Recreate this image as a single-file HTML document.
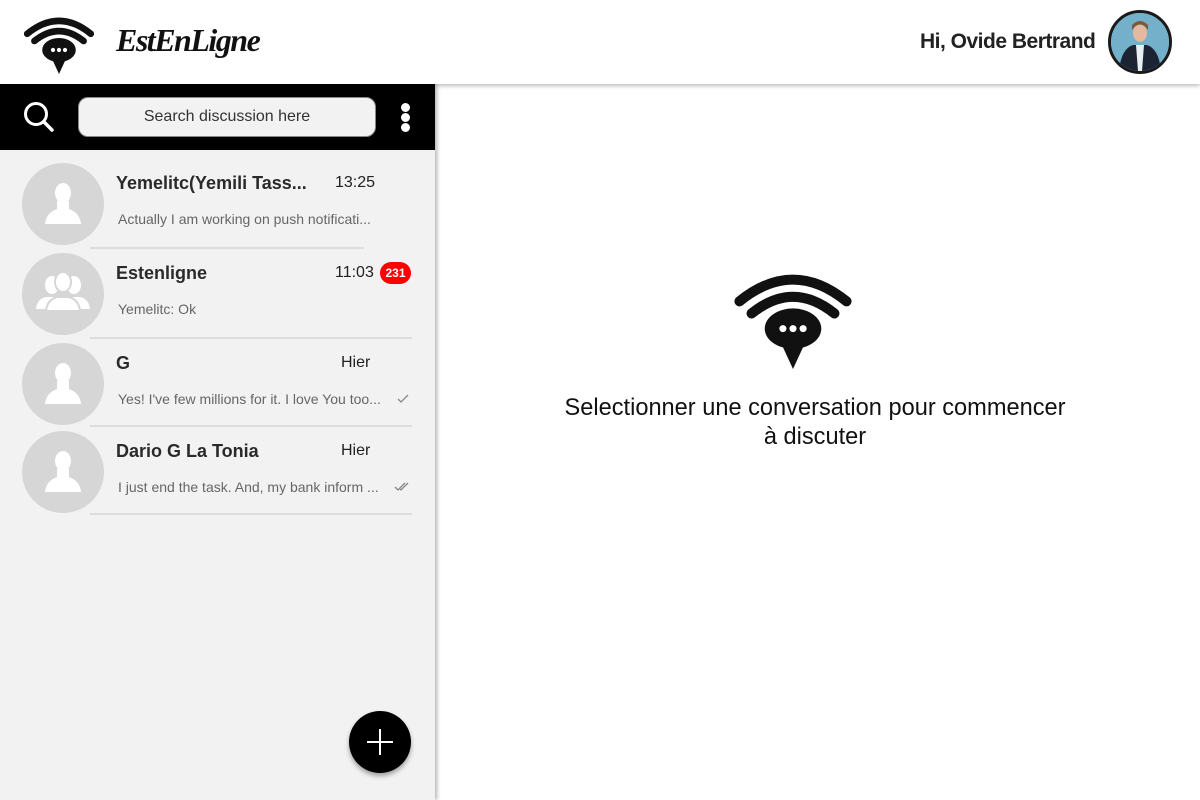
<!DOCTYPE html>
<html><head><meta charset="utf-8"><style>
*{box-sizing:border-box;margin:0;padding:0}
body{width:1200px;height:800px;overflow:hidden;background:#fff;font-family:"Liberation Sans",sans-serif;position:relative}
.hdr{position:absolute;left:0;top:0;width:1200px;height:84px;background:#fff;box-shadow:0 2px 4px rgba(0,0,0,.25);z-index:3}
.brand{position:absolute;left:116px;top:22px;font-family:"Liberation Serif",serif;font-style:italic;font-weight:bold;font-size:32px;letter-spacing:-1.5px;color:#111}
.hi{position:absolute;left:920px;top:30px;font-size:21px;font-weight:bold;color:#222;letter-spacing:-0.5px}
.me{position:absolute;left:1108px;top:10px;width:64px;height:64px;border-radius:50%;border:3px solid #1a1a1a;background:#6fa9c4;overflow:hidden}
.side{position:absolute;left:0;top:84px;width:435px;height:716px;background:#f2f2f2;box-shadow:2px 0 4px rgba(0,0,0,.3);z-index:2}
.bar{height:66px;background:#000;position:relative}
.search{position:absolute;left:78px;top:13px;width:298px;height:40px;border-radius:10px;background:#f2f2f2;border:1px solid #888;text-align:center;line-height:38px;font-size:16px;color:#333}
.row{position:absolute;left:0;width:435px;height:90px}
.av{position:absolute;left:22px;top:0;width:82px;height:82px;border-radius:50%;background:#d6d6d6}
.nm{position:absolute;left:116px;top:10px;font-size:18px;font-weight:bold;color:#2a2a2a}
.tm{position:absolute;top:11px;font-size:16px;color:#222}
.msg{position:absolute;left:118px;top:48px;font-size:14px;color:#666}
.ln{position:absolute;left:90px;top:84px;width:322px;height:2px;background:#ddd}
.badge{position:absolute;left:380px;top:100px;width:31px;height:22px;border-radius:11px;background:#f00;color:#fff;font-size:12px;font-weight:bold;text-align:center;line-height:22px}
.fab{position:absolute;left:349px;top:627px;width:62px;height:62px;border-radius:50%;background:#000;box-shadow:0 3px 5px rgba(0,0,0,.35)}
.ctr{position:absolute;left:440px;top:394px;width:750px;text-align:center;font-size:23.6px;line-height:29px;color:#111}
</style></head><body>
<div class="hdr">
<svg style="position:absolute;left:24px;top:14px" width="70" height="60" viewBox="0 0 116 100"><path d="M5,33 Q58,-10 111,33" stroke="#111" stroke-width="11" fill="none" stroke-linecap="round"/><path d="M17,45 Q58,12 99,45" stroke="#111" stroke-width="11" fill="none" stroke-linecap="round"/><ellipse cx="58" cy="60" rx="28" ry="20" fill="#111"/><polygon points="46,74 70,74 58,100" fill="#111"/><circle cx="48" cy="60" r="3.5" fill="#fff"/><circle cx="58" cy="60" r="3.5" fill="#fff"/><circle cx="68" cy="60" r="3.5" fill="#fff"/></svg>
<div class="brand">EstEnLigne</div>
<div class="hi">Hi, Ovide Bertrand</div>
<div class="me"><svg width="58" height="58" viewBox="0 0 58 58"><rect width="58" height="58" fill="#74b0c9"/><path d="M8,58 Q10,36 22,32 L36,32 Q48,36 50,58Z" fill="#1c2433"/><path d="M25,32 L33,32 L31,58 L27,58Z" fill="#e8eef2"/><ellipse cx="29" cy="20" rx="7" ry="9" fill="#e3b9a0"/><path d="M21,17 Q29,6 37,17 L37,12 Q29,4 21,12Z" fill="#7a5a3c"/></svg></div>
</div>
<div class="side">
<div class="bar">
<svg style="position:absolute;left:22px;top:16px" width="34" height="34" viewBox="0 0 34 34"><circle cx="14" cy="14" r="10.5" stroke="#fff" stroke-width="3" fill="none"/><line x1="22" y1="22" x2="30" y2="30" stroke="#fff" stroke-width="3.5" stroke-linecap="round"/></svg>
<div class="search">Search discussion here</div>
<div style="position:absolute;left:401px;top:19px;width:9px;height:9px;border-radius:50%;background:#fff"></div>
<div style="position:absolute;left:401px;top:29px;width:9px;height:9px;border-radius:50%;background:#fff"></div>
<div style="position:absolute;left:401px;top:39px;width:9px;height:9px;border-radius:50%;background:#fff"></div>
</div>
<div class="row" style="top:79px"><div class="av"><svg width="82" height="82"><ellipse cx="41" cy="30" rx="8" ry="10" fill="#fff"/><path d="M23,61 Q24,50 35,46 L35,38 L47,38 L47,46 Q58,50 59,61Z" fill="#fff"/></svg></div><div class="nm">Yemelitc(Yemili Tass...</div><div class="tm" style="left:335px">13:25</div><div class="msg">Actually I am working on push notificati...</div><div class="ln" style="width:274px"></div></div>
<div class="row" style="top:169px"><div class="av"><svg width="82" height="82"><ellipse cx="30" cy="32" rx="7" ry="9" fill="#fff"/><ellipse cx="52" cy="32" rx="7" ry="9" fill="#fff"/><path d="M14,56 Q15,46 24,44 L36,44 Q45,46 46,56Z M36,56 Q37,46 46,44 L58,44 Q67,46 68,56Z" fill="#fff"/><ellipse cx="41" cy="29" rx="8" ry="10" fill="#fff" stroke="#d6d6d6" stroke-width="2"/><path d="M24,58 Q25,47 35,44 L47,44 Q57,47 58,58Z" fill="#fff" stroke="#d6d6d6" stroke-width="2"/></svg></div><div class="nm">Estenligne</div><div class="tm" style="left:335px">11:03</div><div class="msg">Yemelitc: Ok</div><div class="ln"></div></div>
<div class="badge" style="top:178px">231</div>
<div class="row" style="top:259px"><div class="av"><svg width="82" height="82"><ellipse cx="41" cy="30" rx="8" ry="10" fill="#fff"/><path d="M23,61 Q24,50 35,46 L35,38 L47,38 L47,46 Q58,50 59,61Z" fill="#fff"/></svg></div><div class="nm">G</div><div class="tm" style="left:341px">Hier</div><div class="msg">Yes! I've few millions for it. I love You too...</div><svg style="position:absolute;left:396px;top:50px" width="14" height="12"><path d="M2,6 L5,9 L12,2" stroke="#888" stroke-width="1.3" fill="none"/></svg><div class="ln" style="top:82px"></div></div>
<div class="row" style="top:347px"><div class="av"><svg width="82" height="82"><ellipse cx="41" cy="30" rx="8" ry="10" fill="#fff"/><path d="M23,61 Q24,50 35,46 L35,38 L47,38 L47,46 Q58,50 59,61Z" fill="#fff"/></svg></div><div class="nm">Dario G La Tonia</div><div class="tm" style="left:341px">Hier</div><div class="msg">I just end the task. And, my bank inform ...</div><svg style="position:absolute;left:394px;top:50px" width="18" height="12"><path d="M1,6 L4,9 L11,2 M6,8 L7,9 L14,2" stroke="#888" stroke-width="1.3" fill="none"/></svg><div class="ln" style="top:82px"></div></div>
<div class="fab"><div style="position:absolute;left:18px;top:30px;width:26px;height:2px;background:#fff"></div><div style="position:absolute;left:30px;top:18px;width:2px;height:26px;background:#fff"></div></div>
</div>
<svg style="position:absolute;left:734px;top:268px" width="118" height="101" viewBox="0 0 116 100"><path d="M5,33 Q58,-10 111,33" stroke="#111" stroke-width="10" fill="none" stroke-linecap="round"/><path d="M17,45 Q58,12 99,45" stroke="#111" stroke-width="10" fill="none" stroke-linecap="round"/><ellipse cx="58" cy="60" rx="28" ry="20" fill="#111"/><polygon points="46,74 70,74 58,100" fill="#111"/><circle cx="48" cy="60" r="3.5" fill="#fff"/><circle cx="58" cy="60" r="3.5" fill="#fff"/><circle cx="68" cy="60" r="3.5" fill="#fff"/></svg>
<div class="ctr">Selectionner une conversation pour commencer<br>à discuter</div>
</body></html>
